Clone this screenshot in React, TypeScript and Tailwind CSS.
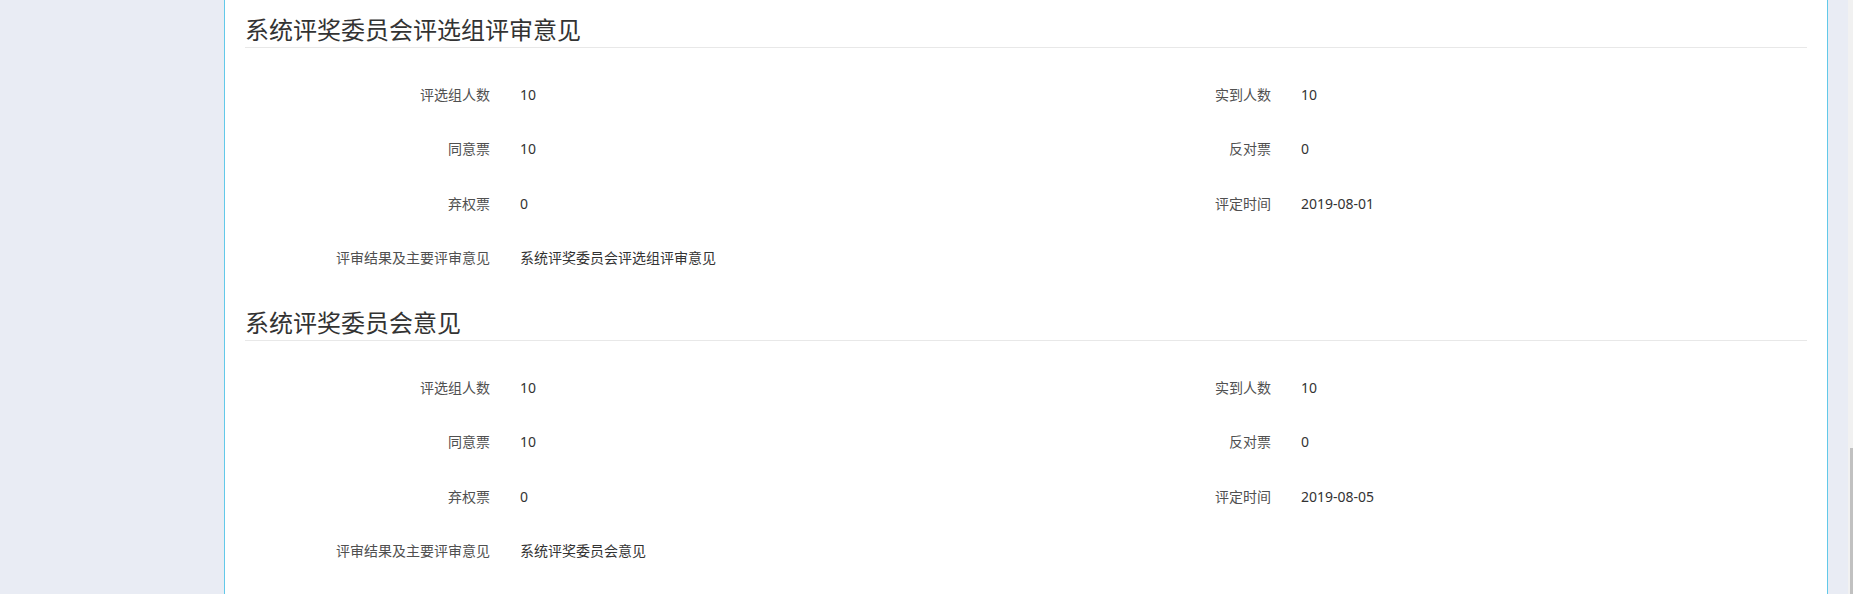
import React from "react";

type Field = { label: string; value: string; full?: boolean };

const sections: { title: string; fields: Field[] }[] = [
  {
    title: "系统评奖委员会评选组评审意见",
    fields: [
      { label: "评选组人数", value: "10" },
      { label: "实到人数", value: "10" },
      { label: "同意票", value: "10" },
      { label: "反对票", value: "0" },
      { label: "弃权票", value: "0" },
      { label: "评定时间", value: "2019-08-01" },
      { label: "评审结果及主要评审意见", value: "系统评奖委员会评选组评审意见", full: true },
    ],
  },
  {
    title: "系统评奖委员会意见",
    fields: [
      { label: "评选组人数", value: "10" },
      { label: "实到人数", value: "10" },
      { label: "同意票", value: "10" },
      { label: "反对票", value: "0" },
      { label: "弃权票", value: "0" },
      { label: "评定时间", value: "2019-08-05" },
      { label: "评审结果及主要评审意见", value: "系统评奖委员会意见", full: true },
    ],
  },
];

function Section({ title, fields }: { title: string; fields: Field[] }) {
  return (
    <div className="mb-[21px]">
      <h2 className="text-[24px] leading-[34px] text-[#333] border-b border-[#e8e8e8] font-normal">
        {title}
      </h2>
      <div className="grid grid-cols-2 mt-[19px]">
        {fields.map((f) => (
          <div key={f.label} className={"flex items-center h-[54.5px] text-[14px] " + (f.full ? "col-span-2" : "")}>
            <span className="w-[245px] shrink-0 text-right text-[#505050]">{f.label}</span>
            <span className="ml-[30px] text-[#333]">{f.value}</span>
          </div>
        ))}
      </div>
    </div>
  );
}

export default function App() {
  return (
    <div
      className="flex h-[594px] w-[1853px] overflow-hidden bg-[#e9ecf4]"
      style={{ fontFamily: '"Noto Sans", "Noto Sans CJK SC", sans-serif' }}
    >
      {/* sidebar */}
      <div className="w-[224px] shrink-0" />

      {/* card */}
      <div className="w-[1604px] shrink-0 bg-white border-x border-[#62c9e9] px-5 pt-[13px]">
        {sections.map((s) => (
          <Section key={s.title} title={s.title} fields={s.fields} />
        ))}
      </div>

      <div className="w-[20px] shrink-0" />

      {/* scrollbar */}
      <div className="w-[5px] shrink-0 bg-[#f1f1f1] flex flex-col">
        <div className="ml-[2px] w-[3px] mt-[448px] flex-1 bg-[#c1c1c1]" />
      </div>
    </div>
  );
}
